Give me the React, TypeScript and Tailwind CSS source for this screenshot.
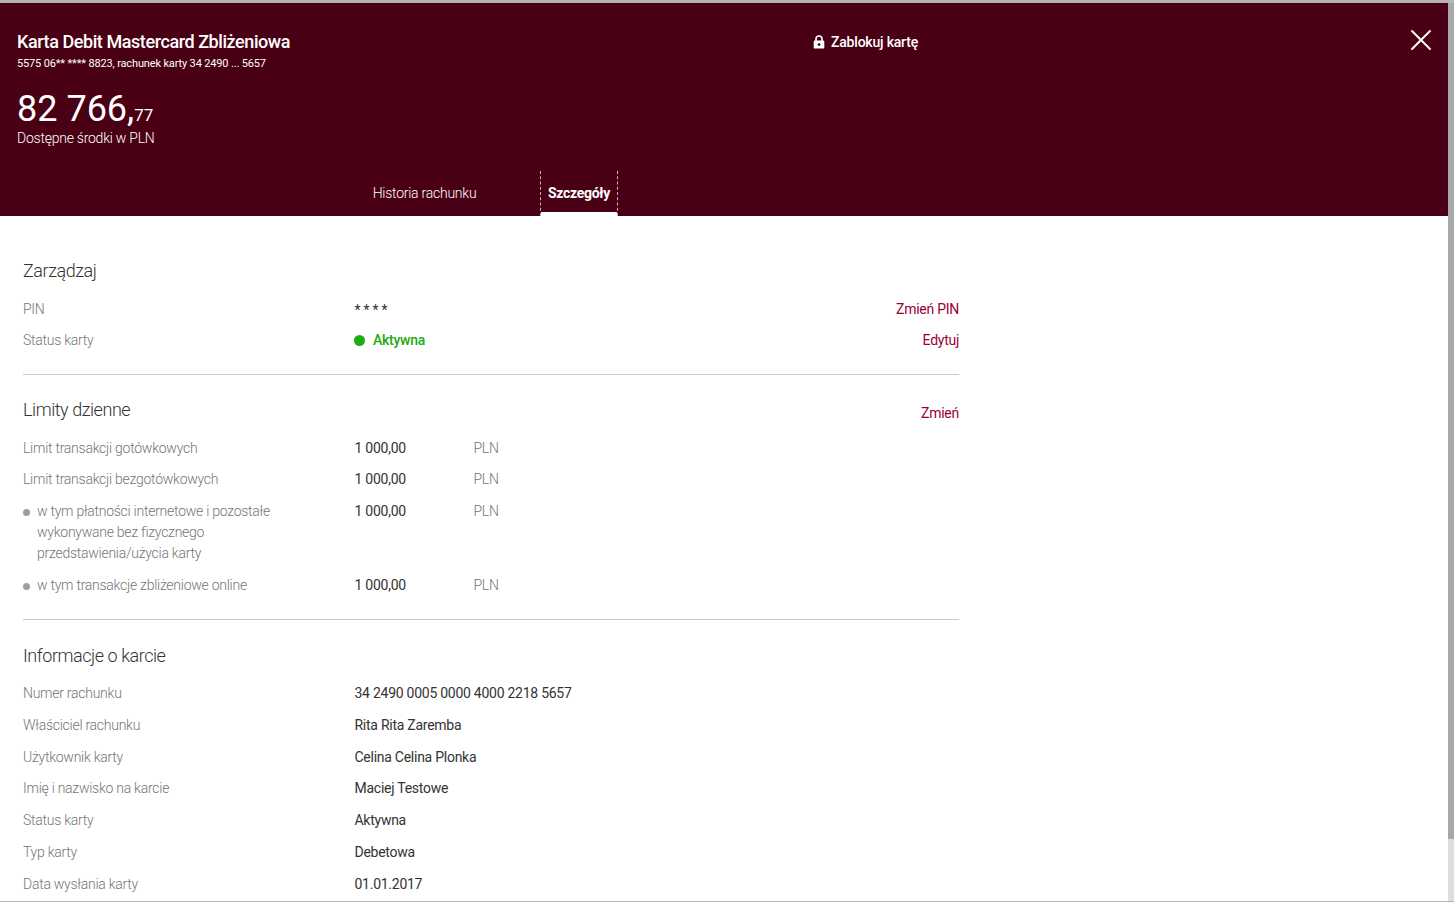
import { X } from "lucide-react";

type Row = { label: string; value: string; currency?: boolean; bullet?: boolean };

const LIMITS: Row[] = [
  { label: "Limit transakcji gotówkowych", value: "1 000,00", currency: true },
  { label: "Limit transakcji bezgotówkowych", value: "1 000,00", currency: true },
  {
    label: "w tym płatności internetowe i pozostałe wykonywane bez fizycznego przedstawienia/użycia karty",
    value: "1 000,00",
    currency: true,
    bullet: true,
  },
  { label: "w tym transakcje zbliżeniowe online", value: "1 000,00", currency: true, bullet: true },
];

const INFO: Row[] = [
  { label: "Numer rachunku", value: "34 2490 0005 0000 4000 2218 5657" },
  { label: "Właściciel rachunku", value: "Rita Rita Zaremba" },
  { label: "Użytkownik karty", value: "Celina Celina Plonka" },
  { label: "Imię i nazwisko na karcie", value: "Maciej Testowe" },
  { label: "Status karty", value: "Aktywna" },
  { label: "Typ karty", value: "Debetowa" },
  { label: "Data wysłania karty", value: "01.01.2017" },
];

function LockIcon() {
  return (
    <svg width="12" height="14" viewBox="0 0 12 14" className="mb-[1px]">
      <path d="M3 6.5V4a3 3 0 0 1 6 0v2.5" fill="none" stroke="white" strokeWidth="1.6" />
      <rect x="0.7" y="5.6" width="10.6" height="8" rx="1.2" fill="white" />
      <circle cx="6" cy="9.6" r="1.4" fill="#4a0014" />
    </svg>
  );
}

function DataRow({ row }: { row: Row }) {
  return (
    <div className="flex text-[14px] leading-[21.2px] tracking-[-0.26px]">
      <div className="flex w-[331.5px] shrink-0 font-light text-[#757575]">
        {row.bullet && <span className="mt-[8px] mr-[7px] h-[7px] w-[7px] shrink-0 rounded-full bg-[#9e9e9e]" />}
        <span className={row.bullet ? "w-[260px]" : ""}>{row.label}</span>
      </div>
      <div className={row.currency ? "w-[119px] text-[#333]" : "text-[#333]"}>{row.value}</div>
      {row.currency && <div className="font-light text-[#757575]">PLN</div>}
    </div>
  );
}

export default function App() {
  return (
    <div className="flex h-[904px] w-[1454px] flex-col overflow-hidden bg-white font-['Roboto',sans-serif]">
      <div className="h-[3px] shrink-0 bg-[#b4b4b4]" />
      <div className="flex min-h-0 flex-1">
        <div className="min-w-0 flex-1 overflow-hidden">
          <header className="h-[213px] bg-[#4a0014] text-white">
            <div className="flex h-[168px]">
              <div className="w-[797px] shrink-0 pl-[17px]">
                <h1 className="mt-[28px] text-[18px] leading-[22px] font-medium tracking-[-0.43px]">
                  Karta Debit Mastercard Zbliżeniowa
                </h1>
                <p className="mt-[3px] text-[11px] leading-[16px] tracking-[-0.15px]">
                  5575 06** **** 8823, rachunek karty 34 2490 ... 5657
                </p>
                <p className="mt-[16px] flex h-[42px] items-baseline text-[36px] leading-[42px] font-normal">
                  82 766,<span className="text-[17px]">77</span>
                </p>
                <p className="mt-[-1px] text-[14px] leading-[18px] font-light tracking-[-0.24px]">Dostępne środki w PLN</p>
              </div>
              <div className="mt-[29px] ml-[16px] flex h-[20px] items-center gap-[6px] text-[14px] font-medium tracking-[-0.2px]">
                <LockIcon />
                Zablokuj kartę
              </div>
              <button type="button" className="mt-[19px] mr-[9px] ml-auto h-[36px] self-start">
                <X size={36} strokeWidth={1.3} />
              </button>
            </div>
            <nav className="flex h-[45px] pl-[337px]">
              <a className="flex w-[175px] items-center justify-center text-[14px] font-light tracking-[-0.25px]">
                Historia rachunku
              </a>
              <a className="ml-[28px] flex w-[78px] flex-col border-x border-dashed border-[#c9b3b9] text-[14px] font-bold tracking-[-0.3px]">
                <span className="flex flex-1 items-center justify-center pt-[3px]">Szczegóły</span>
                <span className="h-[4px] bg-white" />
              </a>
            </nav>
          </header>

          <main className="w-[959px] pt-[42px] pl-[23px]">
            <section className="w-[936px] border-b border-[#c9c9c9] pb-[23px]">
              <h2 className="text-[18px] leading-[26px] font-light tracking-[-0.45px] text-[#333]">Zarządzaj</h2>
              <div className="mt-[15px] flex h-[21px] text-[14px] leading-[21px] tracking-[-0.26px]">
                <span className="w-[331.5px] font-light text-[#757575]">PIN</span>
                <span className="h-[21px] leading-[23px] text-[#333]">* * * *</span>
                <a className="ml-auto text-[#99003a]">Zmień PIN</a>
              </div>
              <div className="mt-[10px] flex text-[14px] leading-[21px] tracking-[-0.26px]">
                <span className="w-[331px] font-light text-[#757575]">Status karty</span>
                <span className="flex items-center font-medium text-[#20ab10]">
                  <span className="mr-[8px] h-[11px] w-[11px] rounded-full bg-[#20ab10]" />
                  Aktywna
                </span>
                <a className="ml-auto text-[#99003a]">Edytuj</a>
              </div>
            </section>

            <section className="w-[936px] border-b border-[#c9c9c9] pb-[23px]">
              <div className="mt-[22px] flex">
                <h2 className="text-[18px] leading-[26px] font-light tracking-[-0.45px] text-[#333]">Limity dzienne</h2>
                <a className="mt-[6px] ml-auto text-[14px] leading-[21px] tracking-[-0.26px] text-[#99003a]">Zmień</a>
              </div>
              <div className="mt-[14px] flex flex-col gap-[10.2px]">
                {LIMITS.map((row) => (
                  <DataRow key={row.label} row={row} />
                ))}
              </div>
            </section>

            <section className="w-[936px]">
              <h2 className="mt-[23px] text-[18px] leading-[26px] font-light tracking-[-0.45px] text-[#333]">
                Informacje o karcie
              </h2>
              <div className="mt-[14px] flex flex-col gap-[10.7px]">
                {INFO.map((row) => (
                  <DataRow key={row.label} row={row} />
                ))}
              </div>
            </section>
          </main>
        </div>
        <div className="flex w-[6px] shrink-0 flex-col bg-[#dedede]">
          <div className="h-[836px] bg-[#a8a8a8]" />
        </div>
      </div>
      <div className="h-[1px] shrink-0 bg-[#b4b4b4]" />
      <div className="h-[2px] shrink-0 bg-white" />
    </div>
  );
}
